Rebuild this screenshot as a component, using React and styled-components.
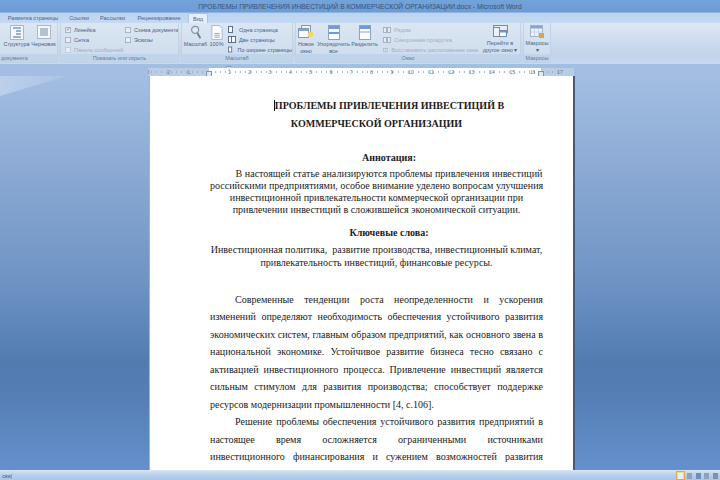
import React from 'react'
import styled, { createGlobalStyle } from 'styled-components'

const Global = createGlobalStyle`
   html, body { margin: 0; padding: 0; overflow: hidden; background: #5f8dc6; }
   * { box-sizing: border-box; }
`
const Window = styled.div`
   width: 720px;
   height: 480px;
   display: flex;
   flex-direction: column;
   overflow: hidden;
   font-family: 'Liberation Sans', Arial, sans-serif;
`
const TitleBar = styled.div`
   height: 12px;
   flex: none;
   display: flex;
   align-items: center;
   justify-content: center;
   font-size: 6.7px;
   color: #3a5172;
   background: linear-gradient(#74a3da, #6c9cd5);
   white-space: nowrap;
`
const TabStrip = styled.div`
   height: 11px;
   flex: none;
   display: flex;
   align-items: stretch;
   padding-left: 9px;
   background: linear-gradient(#bcd4f0, #c4d9f2);
   border-top: 1px solid #8fb4e2;
`
const TabItem = styled.div`
   display: flex;
   align-items: center;
   justify-content: center;
   font-size: 5.6px;
   color: #4a6387;
   white-space: nowrap;
   margin-right: ${p => p.$gap}px;
   width: ${p => p.$w}px;
   ${p => p.$active && `
      background: #e6eef7;
      border: 1px solid #a9c3e2;
      border-bottom: none;
      border-radius: 2px 2px 0 0;
   `}
`
const Ribbon = styled.div`
   height: 42px;
   flex: none;
   display: flex;
   gap: 2px;
   padding-bottom: 1px;
   background: linear-gradient(#dfe9f5 0%, #d2dfef 30%, #c3d4e9 75%, #c7d9ee 100%);
   border-bottom: 1px solid #a4c0e0;
`
const Group = styled.div`
   width: ${p => p.$w}px;
   flex: none;
   display: flex;
   flex-direction: column;
   border: 1px solid #c0d2e6;
   border-top: none;
   border-left: ${p => (p.$open ? 'none' : '1px solid #c0d2e6')};
   border-radius: 0 0 2px 2px;
   background: linear-gradient(#dbe6f2, #ccdbec);
`
const GroupBody = styled.div`
   flex: 1;
   display: flex;
   padding: 2px 0 0 ${p => p.$left || 0}px;
   gap: ${p => p.$gap || 0}px;
   overflow: hidden;
`
const GroupLabel = styled.div`
   height: 8px;
   flex: none;
   display: flex;
   align-items: center;
   justify-content: ${p => (p.$end ? 'flex-start' : 'center')};
   padding-left: ${p => (p.$end ? 1 : 0)}px;
   font-size: 5.5px;
   color: #64799a;
   background: #c1d5ea;
   white-space: nowrap;
   overflow: hidden;
`
const BigButton = styled.div`
   width: ${p => p.$w}px;
   flex: none;
   display: flex;
   flex-direction: column;
   align-items: center;
   font-size: 5.5px;
   line-height: 7px;
   color: #4a6283;
   text-align: center;
   white-space: nowrap;
`
const BigIcon = styled.div`
   height: 15px;
   margin-bottom: 1px;
   display: flex;
   align-items: flex-start;
   justify-content: center;
`
const Stack = styled.div`
   display: flex;
   flex-direction: column;
   gap: 3px;
   padding-top: 1px;
   width: ${p => p.$w}px;
   margin-left: ${p => p.$left || 0}px;
   flex: none;
`
const SmallItem = styled.div`
   height: 7px;
   display: flex;
   align-items: center;
   gap: 3px;
   font-size: 5.5px;
   color: ${p => (p.$off ? '#a0afc2' : '#4a6283')};
   white-space: nowrap;
`
const Check = styled.span`
   width: 6px;
   height: 6px;
   flex: none;
   display: flex;
   align-items: center;
   justify-content: center;
   border: 1px solid ${p => (p.$off ? '#c4ced9' : '#a9b6c6')};
   background: #e6edf5;
   color: #4a5f80;
   font-size: 5px;
   line-height: 1;
`
const RulerRow = styled.div`
   height: 11px;
   flex: none;
   padding: 3px 0 0 148px;
   display: flex;
   background: #a3bee2;
`
const Ruler = styled.div`
   position: relative;
   width: 426px;
   height: 8px;
   display: flex;
   background: #b9cde6;
`
const RulerZone = styled.div`
   width: ${p => p.$w}px;
   flex: none;
   display: flex;
   flex-direction: ${p => (p.$rev ? 'row-reverse' : 'row')};
   background: ${p => (p.$white ? '#fdfeff' : '#b9cde6')};
   overflow: hidden;
`
const RulerCell = styled.span`
   width: 20.3px;
   flex: none;
   display: flex;
   align-items: center;
   justify-content: ${p => (p.$rev ? 'flex-start' : 'flex-end')};
   font-size: 5px;
   color: #66768c;
   transform: translateX(${p => (p.$rev ? -1.5 : 1.5)}px);
   background: radial-gradient(circle, #98a5b7 0.45px, transparent 0.7px) 2.5px 0 / 5px 8px repeat-x;
`
const Marker = styled.div`
   position: absolute;
   left: ${p => p.$x}px;
   top: ${p => (p.$top ? -2 : 3)}px;
   width: 6px;
   height: ${p => (p.$top ? 4 : 6)}px;
   background: #dfe7f1;
   border: 1px solid #7f93ad;
   clip-path: ${p => (p.$top ? 'polygon(0 0,100% 0,50% 100%)' : 'none')};
`
const Workspace = styled.div`
   position: relative;
   flex: 1;
   min-height: 0;
   display: flex;
   padding-left: 150px;
   overflow: hidden;
   background: linear-gradient(#a3bee2 0%, #8dabd5 22%, #6e94c4 52%, #527bb0 73%, #557fb5 82%, #6690cc 100%);
   &::before {
      content: '';
      position: absolute;
      left: 0;
      top: -1px;
      width: 70px;
      height: 21px;
      background: linear-gradient(90deg, #bcd0ea, #a9c2e4);
      clip-path: polygon(0 0, 100% 0, 0 100%);
   }
`
const Page = styled.div`
   position: relative;
   width: 423px;
   height: 394px;
   flex: none;
   padding: 21px 30px 0 60px;
   background: #fff;
   box-shadow: 2px 0 0 #47587a, -1px 0 0 #a9b2bf;
   color: #1c1c1c;
   font-family: 'Liberation Serif', 'Times New Roman', serif;
`
const Block = styled.div`
   margin-top: ${p => p.$top || 0}px;
   font-size: 10.05px;
   line-height: ${p => p.$lh || 12}px;
   font-weight: ${p => (p.$bold ? 700 : 400)};
`
const Line = styled.div`
   padding-left: ${p => p.$indent || 0}px;
   text-align: ${p => p.$align || 'center'};
   text-align-last: ${p => p.$align || 'center'};
   white-space: ${p => (p.$align === 'justify' ? 'normal' : 'nowrap')};
`
const Caret = styled.span`
   display: inline-block;
   width: 1px;
   height: 11px;
   vertical-align: -2px;
   background: #111;
`
const StatusBar = styled.div`
   height: 10px;
   flex: none;
   display: flex;
   align-items: center;
   justify-content: space-between;
   font-size: 5.5px;
   color: #3d5677;
   background: linear-gradient(#cfe0f5, #b7cfec 45%, #a9c5e8);
   border-top: 1px solid #d7e4f4;
`
const StatusLeft = styled.div`
   width: 13px;
   height: 100%;
   display: flex;
   align-items: center;
   justify-content: flex-end;
   overflow: hidden;
   border-right: 1px solid #bcd0e8;
`
const ViewButtons = styled.div`
   display: flex;
   align-items: center;
   height: 100%;
`
const ViewButton = styled.div`
   width: 8.8px;
   height: 9px;
   display: flex;
   align-items: center;
   justify-content: center;
   background: ${p => (p.$on ? '#f8d98c' : 'transparent')};
   border: ${p => (p.$on ? '1px solid #d9aa4e' : 'none')};
`
const ViewGlyph = styled.span`
   width: 5px;
   height: 6px;
   background: ${p => p.$c};
`

const IconStructure = () => (
   <svg width="14" height="15" viewBox="0 0 14 15">
      <rect x="0.5" y="0.5" width="13" height="14" fill="#f4f7fb" stroke="#a9b7c8" />
      <path d="M3 3h8M6 6h5M6 9h5M3 12h8" stroke="#7b9cc4" strokeWidth="1.4" />
   </svg>
)
const IconDraft = () => (
   <svg width="14" height="14" viewBox="0 0 14 14">
      <rect x="0.5" y="0.5" width="13" height="13" fill="#f4f7fb" stroke="#a9b7c8" />
      <rect x="3" y="3" width="8" height="8" fill="#b3c1d3" />
   </svg>
)
const IconZoom = () => (
   <svg width="12" height="15" viewBox="0 0 13 17">
      <circle cx="5.5" cy="5.5" r="4" fill="#dfe9f3" stroke="#8193a8" strokeWidth="1.3" />
      <path d="M8 9l3.5 6" stroke="#6d7c8f" strokeWidth="2" />
   </svg>
)
const IconHundred = () => (
   <svg width="12" height="15" viewBox="0 0 12 16">
      <path d="M0.5 0.5h8l3 3v12h-11z" fill="#fbfcfe" stroke="#a9b7c8" />
      <path d="M3 9h6M3 11h6M3 13h6" stroke="#9aa8b8" />
   </svg>
)
const IconPageSmall = ({ two }) => (
   <svg width="8" height="7" viewBox="0 0 8 7">
      <rect x="0.5" y="0.5" width="4" height="6" fill="#f6f8fb" stroke="#5c6e85" />
      {two && <rect x="3.5" y="0.5" width="4" height="6" fill="#f6f8fb" stroke="#5c6e85" />}
   </svg>
)
const IconNewWindow = () => (
   <svg width="16" height="15" viewBox="0 0 16 15">
      <rect x="3.5" y="0.5" width="9" height="7" fill="#eef3f9" stroke="#8897ab" />
      <rect x="0.5" y="3.5" width="10" height="9" fill="#fafcfe" stroke="#8897ab" />
      <rect x="1" y="4" width="9" height="2" fill="#7ea6d6" />
      <circle cx="12.5" cy="9.5" r="2.8" fill="#f5d85a" />
   </svg>
)
const IconSplit = ({ lines }) => (
   <svg width="12" height="15" viewBox="0 0 12 15">
      <rect x="0.5" y="0.5" width="11" height="14" fill="#fbfcfe" stroke="#8ba3c4" />
      <rect x="1" y="1" width="10" height="3" fill="#6f9bd2" />
      {lines && <rect x="1" y="7" width="10" height="2" fill="#6f9bd2" />}
      {!lines && <rect x="1" y="6" width="10" height="2" fill="#c7d3e2" />}
   </svg>
)
const IconSwitch = () => (
   <svg width="15" height="13" viewBox="0 0 15 13">
      <rect x="0.5" y="0.5" width="14" height="7" fill="#e6ecf3" stroke="#7f8b9a" />
      <rect x="0.5" y="2.5" width="6" height="9" fill="#eef2f7" stroke="#7f8b9a" />
      <rect x="6.5" y="5.5" width="7" height="6" fill="#fafcfe" stroke="#6f8aae" />
      <rect x="7" y="6" width="6" height="1.5" fill="#6f9bd2" />
   </svg>
)
const IconMacro = () => (
   <svg width="14" height="13" viewBox="0 0 14 13">
      <rect x="0.5" y="0.5" width="12" height="11" fill="#f0f4f9" stroke="#9fb2ca" />
      <rect x="1" y="1" width="11" height="2.5" fill="#7ea6d6" />
      <path d="M4.5 3.5v8M8.5 3.5v8M1 7h11" stroke="#c5d3e3" />
      <rect x="9" y="8" width="5" height="5" fill="#d9a441" />
   </svg>
)
const IconWindowOff = () => (
   <svg width="8" height="6" viewBox="0 0 8 6">
      <rect x="0.5" y="0.5" width="3" height="5" fill="#e5ebf2" stroke="#a8b3c1" />
      <rect x="4.5" y="0.5" width="3" height="5" fill="#e5ebf2" stroke="#a8b3c1" />
   </svg>
)

const leftCells = ['1', '2', '3']
const whiteCells = ['1', '2', '3', '4', '5', '6', '7', '8', '9', '10', '11', '12', '13', '14', '15', '16']

const Doc = () => (
   <Page>
      <Block $lh={18} $bold>
         <Line $indent={25}><Caret />ПРОБЛЕМЫ ПРИВЛЕЧЕНИЯ ИНВЕСТИЦИЙ В</Line>
         <Line>КОММЕРЧЕСКОЙ ОРГАНИЗАЦИИ</Line>
      </Block>
      <Block $top={19} $bold><Line $indent={25}>Аннотация:</Line></Block>
      <Block $top={4}>
         <Line $indent={25}>В настоящей статье анализируются проблемы привлечения инвестиций</Line>
         <Line>российскими предприятиями, особое внимание уделено вопросам улучшения</Line>
         <Line>инвестиционной привлекательности коммерческой организации при</Line>
         <Line>привлечении инвестиций в сложившейся экономической ситуации.</Line>
      </Block>
      <Block $top={11} $bold><Line $indent={25}>Ключевые слова:</Line></Block>
      <Block $top={4} $lh={13}>
         <Line>Инвестиционная политика,&nbsp; развитие производства, инвестиционный климат,</Line>
         <Line>привлекательность инвестиций, финансовые ресурсы.</Line>
      </Block>
      <Block $top={22} $lh={17.45}>
         <Line $align="justify" $indent={25}>Современные тенденции роста неопределенности и ускорения</Line>
         <Line $align="justify">изменений определяют необходимость обеспечения устойчивого развития</Line>
         <Line $align="justify">экономических систем, главным образом предприятий, как основного звена в</Line>
         <Line $align="justify">национальной экономике. Устойчивое развитие бизнеса тесно связано с</Line>
         <Line $align="justify">активацией инвестиционного процесса. Привлечение инвестиций является</Line>
         <Line $align="justify">сильным стимулом для развития производства; способствует поддержке</Line>
         <Line $align="left">ресурсов модернизации промышленности [4, с.106].</Line>
         <Line $align="justify" $indent={25}>Решение проблемы обеспечения устойчивого развития предприятий в</Line>
         <Line $align="justify">настоящее время осложняется ограниченными источниками</Line>
         <Line $align="justify">инвестиционного финансирования и сужением возможностей развития</Line>
      </Block>
   </Page>
)

export default function App() {
   return (
      <Window>
         <Global />
         <TitleBar>ПРОБЛЕМЫ ПРИВЛЕЧЕНИЯ ИНВЕСТИЦИЙ В КОММЕРЧЕСКОЙ ОРГАНИЗАЦИИ.docx - Microsoft Word</TitleBar>
         <TabStrip>
            <TabItem $w={48} $gap={13}>Разметка страницы</TabItem>
            <TabItem $w={18} $gap={13}>Ссылки</TabItem>
            <TabItem $w={23} $gap={14}>Рассылки</TabItem>
            <TabItem $w={42} $gap={8}>Рецензирование</TabItem>
            <TabItem $w={20} $gap={0} $active>Вид</TabItem>
         </TabStrip>
         <Ribbon>
            <Group $w={58} $open>
               <GroupBody $gap={2} $left={4}>
                  <BigButton $w={25}><BigIcon><IconStructure /></BigIcon>Структура</BigButton>
                  <BigButton $w={25}><BigIcon><IconDraft /></BigIcon>Черновик</BigButton>
               </GroupBody>
               <GroupLabel $end>документа</GroupLabel>
            </Group>
            <Group $w={119}>
               <GroupBody $left={4}>
                  <Stack $w={60}>
                     <SmallItem><Check>✓</Check>Линейка</SmallItem>
                     <SmallItem><Check />Сетка</SmallItem>
                     <SmallItem $off><Check $off />Панель сообщений</SmallItem>
                  </Stack>
                  <Stack $w={52}>
                     <SmallItem><Check />Схема документа</SmallItem>
                     <SmallItem><Check />Эскизы</SmallItem>
                  </Stack>
               </GroupBody>
               <GroupLabel>Показать или скрыть</GroupLabel>
            </Group>
            <Group $w={112}>
               <GroupBody $gap={1} $left={2}>
                  <BigButton $w={23}><BigIcon><IconZoom /></BigIcon>Масштаб</BigButton>
                  <BigButton $w={17}><BigIcon><IconHundred /></BigIcon>100%</BigButton>
                  <Stack $w={64} $left={2}>
                     <SmallItem><IconPageSmall />Одна страница</SmallItem>
                     <SmallItem><IconPageSmall two />Две страницы</SmallItem>
                     <SmallItem><IconPageSmall />По ширине страницы</SmallItem>
                  </Stack>
               </GroupBody>
               <GroupLabel>Масштаб</GroupLabel>
            </Group>
            <Group $w={226}>
               <GroupBody $gap={1}>
                  <BigButton $w={20}><BigIcon><IconNewWindow /></BigIcon>Новое<br />окно</BigButton>
                  <BigButton $w={33}><BigIcon><IconSplit lines /></BigIcon>Упорядочить<br />все</BigButton>
                  <BigButton $w={27}><BigIcon><IconSplit /></BigIcon>Разделить</BigButton>
                  <Stack $w={95} $left={4}>
                     <SmallItem $off><IconWindowOff />Рядом</SmallItem>
                     <SmallItem $off><IconWindowOff />Синхронная прокрутка</SmallItem>
                     <SmallItem $off><IconWindowOff />Восстановить расположение окна</SmallItem>
                  </Stack>
                  <BigButton $w={42}><BigIcon><IconSwitch /></BigIcon>Перейти в<br />другое окно ▾</BigButton>
               </GroupBody>
               <GroupLabel>Окно</GroupLabel>
            </Group>
            <Group $w={28}>
               <GroupBody $left={1}>
                  <BigButton $w={24}><BigIcon><IconMacro /></BigIcon>Макросы<br />▾</BigButton>
               </GroupBody>
               <GroupLabel>Макросы</GroupLabel>
            </Group>
         </Ribbon>
         <RulerRow>
            <Ruler>
               <RulerZone $w={61} $rev>
                  {leftCells.map(n => <RulerCell key={n} $rev>{n}</RulerCell>)}
               </RulerZone>
               <RulerZone $w={332} $white>
                  {whiteCells.map(n => <RulerCell key={n}>{n}</RulerCell>)}
               </RulerZone>
               <RulerZone $w={33}>
                  <RulerCell>17</RulerCell>
               </RulerZone>
               <Marker $x={58} />
               <Marker $x={78} $top />
               <Marker $x={390} />
            </Ruler>
         </RulerRow>
         <Workspace><Doc /></Workspace>
         <StatusBar>
            <StatusLeft>ски|</StatusLeft>
            <ViewButtons>
               <ViewButton $on><ViewGlyph $c="#e9eef5" /></ViewButton>
               <ViewButton><ViewGlyph $c="#8ea2b8" /></ViewButton>
               <ViewButton><ViewGlyph $c="#6f8fb4" /></ViewButton>
               <ViewButton><ViewGlyph $c="#8ea2b8" /></ViewButton>
               <ViewButton><ViewGlyph $c="#8192a6" /></ViewButton>
            </ViewButtons>
         </StatusBar>
      </Window>
   )
}
